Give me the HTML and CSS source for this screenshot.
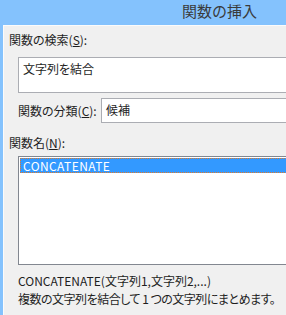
FILE: index.html
```html
<!DOCTYPE html>
<html lang="ja">
<head>
    <meta charset="UTF-8">
    <title>関数の挿入</title>
    <link rel="stylesheet" href="styles.css">
</head>
<body>
    <div class="window">
        <div class="titlebar">関数の挿入</div>
        <div class="content">
            <label class="label" for="search">関数の検索(<u>S</u>):</label>
            <div class="textbox" id="search">文字列を結合</div>

            <div class="category">
                <label class="label">関数の分類(<u>C</u>):</label>
                <div class="combo">候補</div>
            </div>

            <label class="label">関数名(<u>N</u>):</label>
            <div class="listbox">
                <div class="item selected">CONCATENATE</div>
            </div>

            <p class="syntax">CONCATENATE(文字列1,文字列2,...)</p>
            <p class="desc">複数の文字列を結合して 1 つの文字列にまとめます。</p>
        </div>
    </div>
</body>
</html>
```

FILE: styles.css
```css
html, body {
    margin: 0;
    padding: 0;
    width: 286px;
    height: 315px;
    overflow: hidden;
    background: #f0f0f0;
}
body {
    font-family: "Noto Sans CJK JP", sans-serif;
    font-size: 12px;
    line-height: 16px;
    color: #1e1e1e;
    font-feature-settings: "palt";
}
.window {
    width: 286px;
    height: 315px;
    border-left: 3px solid #84c2fd;
    box-sizing: border-box;
    overflow: hidden;
}
.titlebar {
    width: 330px;
    height: 25px;
    background: #84c2fd;
    padding-left: 179px;
    box-sizing: border-box;
    font-size: 15px;
    line-height: 21px;
    color: #3a3a3a;
    font-feature-settings: normal;
}
.content {
    width: 330px;
    border-top: 1px solid #fbfbfb;
    border-left: 1px solid #fbfbfb;
    padding: 6px 0 0 5px;
    height: 290px;
}
.label {
    display: block;
}
.textbox {
    margin: 9px 0 0 9px;
    height: 36px;
    box-sizing: border-box;
    border: 1px solid #abadb3;
    background: #fff;
    padding: 3px 4px;
}
.category {
    display: flex;
    align-items: center;
    margin: 5px 0 0 9px;
}
.category .label {
    width: 83px;
}
.combo {
    flex: 1;
    height: 25px;
    box-sizing: border-box;
    border: 1px solid #abadb3;
    background: #fff;
    padding: 3px 4px;
}
.category + .label {
    margin-top: 12px;
}
.listbox {
    margin: 5px 0 0 9px;
    height: 109px;
    box-sizing: border-box;
    border: 1px solid #828790;
    background: #fff;
    padding: 1px;
}
.item {
    padding: 0 3px;
    height: 15px;
    line-height: 15px;
    letter-spacing: 0.4px;
}
.item.selected {
    background: #3399ff;
    color: #fff;
    outline: 1px dotted #e07a2a;
    outline-offset: -1px;
}
.syntax, .desc {
    margin: 0 0 0 9px;
    line-height: 18px;
    white-space: nowrap;
}
.syntax {
    margin-top: 7px;
}
.desc {
    letter-spacing: -0.5px;
}
```
